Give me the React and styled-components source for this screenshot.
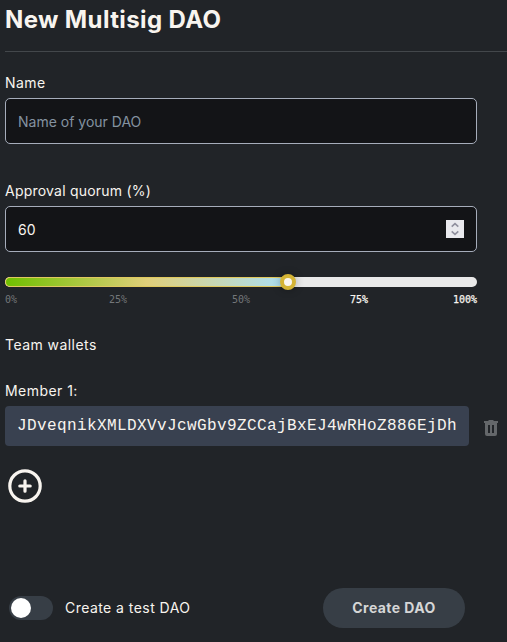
import React, { useState } from "react";
import styled, { createGlobalStyle } from "styled-components";

const GlobalStyle = createGlobalStyle`
  * { box-sizing: border-box; }
  body {
    margin: 0;
    background: #212428;
    color: #f8f4ef;
    font-family: Inter, sans-serif;
    font-size: 14px;
    overflow: hidden;
  }
`;

const Form = styled.form`
  display: flex;
  flex-direction: column;
  height: 642px;
  padding-left: 5px;
`;

const Title = styled.h1`
  margin: 0;
  height: 52px;
  padding-top: 5px;
  border-bottom: 1px solid #43474b;
  font-size: 24px;
  line-height: 30px;
  font-weight: 700;
  letter-spacing: 0.38px;
`;

const Label = styled.label`
  display: block;
  height: 20px;
  margin-top: ${(p) => p.$gap}px;
  font-size: 14px;
  line-height: 20px;
  font-weight: 400;
  letter-spacing: ${(p) => p.$spacing ?? 0.45}px;
`;

const Field = styled.div`
  display: flex;
  align-items: center;
  width: 472px;
  height: 46px;
  margin-top: 5px;
  padding: 0 12px;
  background: #131417;
  border: 1px solid #a6adbb;
  border-radius: 5px;
`;

const Input = styled.input`
  flex: 1;
  min-width: 0;
  padding: 2px 0 0;
  border: 0;
  outline: 0;
  background: transparent;
  color: #f8f4ef;
  font: 400 14px/20px Inter, sans-serif;
  &::placeholder { color: #8492a0; opacity: 1; }
`;

const Stepper = styled.div`
  width: 18px;
  height: 18px;
  background: #e9e9ed;
  svg { display: block; }
`;

const Track = styled.div`
  display: flex;
  align-items: center;
  width: 472px;
  height: 10px;
  margin-top: 25px;
  border-radius: 5px;
  background: #e9e9e9;
`;

const Fill = styled.div`
  height: 10px;
  border: 1px solid #e0c95f;
  border-right: 0;
  border-radius: 5px 0 0 5px;
  background: linear-gradient(90deg, #6fbf00, #e0cf7a 50%, #abe0f5);
`;

const Thumb = styled.div`
  flex: none;
  width: 16px;
  height: 16px;
  margin-left: -8px;
  border: 4px solid #d4b435;
  border-radius: 50%;
  background: #faf6f0;
  box-shadow: 0 0 8px rgba(0, 0, 0, 0.3);
`;

const Scale = styled.div`
  display: grid;
  grid-template-columns: 104px 123px 118px 1fr auto;
  width: 472px;
  height: 14px;
  margin-top: 6px;
  font: 400 10px/14px "DejaVu Sans Mono", monospace;
`;

const Tick = styled.span`
  color: ${(p) => (p.$above ? "#f8f4ef" : "#74777a")};
  -webkit-text-stroke: ${(p) => (p.$above ? "0.25px" : "0")} currentColor;
`;

const MemberRow = styled.div`
  display: flex;
  align-items: center;
  margin-top: 5px;
`;

const Wallet = styled.div`
  width: 464px;
  height: 40px;
  padding-left: 12px;
  border-radius: 4px;
  background: #394150;
  color: #f8f4ef;
  font: 400 16px/41px "Courier New", "Liberation Mono", monospace;
  letter-spacing: 0.399px;
  white-space: nowrap;
`;

const IconButton = styled.button`
  display: flex;
  padding: 0;
  border: 0;
  background: transparent;
`;

const RemoveButton = styled(IconButton)`
  margin: 4px 0 0 15px;
  color: #64676a;
`;

const AddButton = styled(IconButton)`
  align-self: flex-start;
  margin: 23px 0 0 3px;
  color: #f8f4ef;
`;

const Footer = styled.div`
  display: flex;
  align-items: center;
  margin-top: auto;
  padding: 0 42px 14px 4px;
`;

const Switch = styled.button`
  display: flex;
  align-items: center;
  width: 44px;
  height: 24px;
  padding: 0 2px;
  border: 0;
  border-radius: 12px;
  background: #373e46;
`;

const Knob = styled.span`
  width: 20px;
  height: 20px;
  border-radius: 50%;
  background: #fff;
`;

const SwitchLabel = styled.span`
  margin-left: 12px;
  font-weight: 400;
  line-height: 20px;
  letter-spacing: 0.45px;
`;

const Submit = styled.button`
  width: 142px;
  height: 40px;
  margin-left: auto;
  padding: 0;
  border: 0;
  border-radius: 20px;
  background: #373e46;
  color: #d5d6d6;
  font: 700 14px/20px Inter, sans-serif;
  letter-spacing: 0.42px;
`;

const TICKS = [0, 25, 50, 75, 100];

function StepArrows() {
  return (
    <svg width="18" height="18" viewBox="0 0 18 18" fill="none" stroke="#8f8f9d" strokeWidth="1.6">
      <path d="M5.7 6.7 9 3.7l3.3 3M5.7 11.3l3.3 3 3.3-3" />
    </svg>
  );
}

function Trash() {
  return (
    <svg width="14" height="16" viewBox="0 0 14 16" fill="currentColor">
      <path
        fillRule="evenodd"
        d="M0 1h4l1-1h4l1 1h4v2h-1v11q0 2-2 2H3q-2 0-2-2V3H0zM4 5v8h2V5zm4 0v8h2V5z"
      />
    </svg>
  );
}

function PlusCircle() {
  return (
    <svg width="34" height="34" viewBox="0 0 34 34" fill="none" stroke="currentColor" strokeWidth="3.2">
      <circle cx="17" cy="17" r="15.2" />
      <path d="M17 11.8v10.4M11.8 17h10.4" strokeLinecap="round" />
    </svg>
  );
}

export default function App() {
  const [name, setName] = useState("");
  const [quorum, setQuorum] = useState("60");
  return (
    <>
      <GlobalStyle />
      <Form onSubmit={(e) => e.preventDefault()}>
        <Title>New Multisig DAO</Title>
        <Label $gap={21}>Name</Label>
        <Field>
          <Input placeholder="Name of your DAO" value={name} onChange={(e) => setName(e.target.value)} />
        </Field>
        <Label $gap={37} $spacing={0.22}>Approval quorum (%)</Label>
        <Field>
          <Input value={quorum} onChange={(e) => setQuorum(e.target.value)} />
          <Stepper><StepArrows /></Stepper>
        </Field>
        <Track>
          <Fill style={{ width: `${quorum}%` }} />
          <Thumb />
        </Track>
        <Scale>
          {TICKS.map((t) => (
            <Tick key={t} $above={t > Number(quorum)}>{t}%</Tick>
          ))}
        </Scale>
        <Label $gap={28}>Team wallets</Label>
        <Label $gap={26}>Member 1:</Label>
        <MemberRow>
          <Wallet>JDveqnikXMLDXVvJcwGbv9ZCCajBxEJ4wRHoZ886EjDh</Wallet>
          <RemoveButton type="button" aria-label="Remove member"><Trash /></RemoveButton>
        </MemberRow>
        <AddButton type="button" aria-label="Add member"><PlusCircle /></AddButton>
        <Footer>
          <Switch type="button" role="switch" aria-checked={false}><Knob /></Switch>
          <SwitchLabel>Create a test DAO</SwitchLabel>
          <Submit type="submit">Create DAO</Submit>
        </Footer>
      </Form>
    </>
  );
}
